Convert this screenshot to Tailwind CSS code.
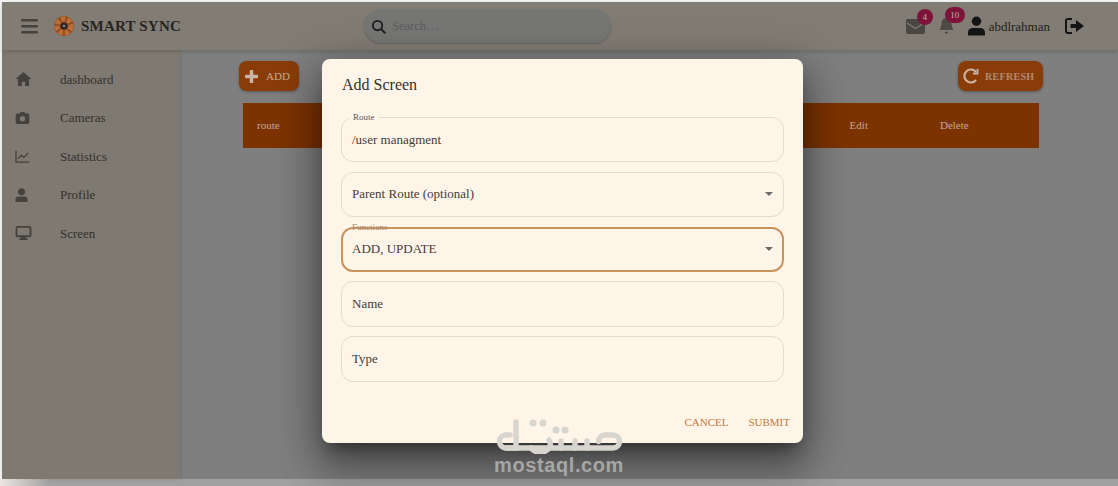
<!DOCTYPE html>
<html lang="en">
<head>
    <meta charset="UTF-8">
    <meta name="viewport" content="width=device-width, initial-scale=1.0">
    <title>Smart Sync</title>
    <script src="https://cdn.jsdelivr.net/npm/@tailwindcss/browser@4"></script>
</head>
<body class="relative w-[1118px] h-[486px] overflow-hidden bg-[#a0a0a0] font-['Liberation_Serif',serif]">
    <div class="h-[2px] bg-[#f2f2f2]"></div>
    <div class="flex">
        <div class="w-[2px] bg-[#f2f2f2]"></div>
        <div class="flex-1 h-[477px] flex flex-col bg-[#7f7f7f]">
            <!-- Header -->
            <header class="h-[48px] shrink-0 flex items-center bg-[#817c74] shadow-[0_2px_4px_rgba(0,0,0,0.15)] relative">
                <svg class="ml-[19px] w-[17px] h-[16px]" viewBox="0 0 17 16" fill="#45423d"><rect y="1" width="17" height="2.4" rx="1"/><rect y="7" width="17" height="2.4" rx="1"/><rect y="13" width="17" height="2.4" rx="1"/></svg>
                <svg class="ml-[16px] w-[20px] h-[20px]" viewBox="0 0 20 20"><circle cx="10" cy="10" r="10" fill="#9a4a18"/><circle cx="10" cy="10" r="7" fill="none" stroke="#b8703c" stroke-width="5" stroke-dasharray="4 2"/><circle cx="10" cy="10" r="3.600" fill="#2c2a28"/><circle cx="10" cy="10" r="1.200" fill="#8a8580"/></svg>
                <span class="ml-[7px] w-[283px] text-[15px] leading-none font-bold tracking-[0.2px] text-[#262422]">SMART SYNC</span>
                <div class="w-[247px] h-[34px] rounded-full bg-[#767675] shadow-[0_1px_2px_rgba(0,0,0,0.2)] flex items-center pl-[7px]">
                    <svg class="w-[15px] h-[15px]" viewBox="0 0 24 24" fill="none" stroke="#1f1f1f" stroke-width="3" stroke-linecap="round"><circle cx="10.500" cy="10.500" r="7.500"/><path d="M16 16l6 6"/></svg>
                    <span class="ml-[6px] text-[12.500px] text-[#5d5d5b]">Search…</span>
                </div>
                <div class="ml-auto flex items-center mr-[33px]">
                    <div class="relative w-[19px] h-[15px]">
                        <svg class="w-[19px] h-[15px]" viewBox="0 0 19 15"><rect width="19" height="15" rx="2" fill="#4a4743"/><path d="M1 4l8.500 5.500L18 4" fill="none" stroke="#817c74" stroke-width="1.400"/></svg>
                        <span class="absolute left-[11px] top-[-10px] w-[16px] h-[16px] rounded-full bg-[#7f1238] text-[9px] leading-[16px] text-center text-[#c9b0a0]">4</span>
                    </div>
                    <div class="relative ml-[13px] w-[17px] h-[18px]">
                        <svg class="w-[17px] h-[18px]" viewBox="0 0 16 20" fill="#4d4a45"><path d="M8 1a5.500 5.500 0 0 0-5.500 5.500c0 5-2 6.500-2 8h15c0-1.500-2-3-2-8A5.500 5.500 0 0 0 8 1z"/><path d="M6 16.500h4a2 2 0 0 1-4 0z"/></svg>
                        <span class="absolute left-[7px] top-[-10px] w-[20px] h-[16px] rounded-full bg-[#7f1238] text-[9px] leading-[16px] text-center text-[#c9b0a0]">10</span>
                    </div>
                    <svg class="ml-[13px] w-[17px] h-[20px]" viewBox="0 0 18 20" fill="#141414"><circle cx="9" cy="5" r="5"/><path d="M0 20v-3a5 5 0 0 1 5-5h8a5 5 0 0 1 5 5v3z"/></svg>
                    <span class="ml-[4px] text-[13px] leading-none text-[#201f1d]">abdlrahman</span>
                    <svg class="ml-[15px] w-[20px] h-[16px]" viewBox="0 0 20 16" fill="#141414"><path d="M7 1H3a2 2 0 0 0-2 2v10a2 2 0 0 0 2 2h4" fill="none" stroke="#141414" stroke-width="2"/><path d="M5.500 6H11V2l8 6-8 6v-4H5.500z"/></svg>
                </div>
            </header>
            <div class="flex flex-1">
                <!-- Sidebar -->
                <aside class="w-[178px] shrink-0 bg-[#7e7971] pt-[10px] shadow-[1px_0_3px_rgba(0,0,0,0.12)]">
                    <div class="h-[38.500px] flex items-center pl-[13px]">
                        <div class="w-[45px]"><svg class="w-[17px] h-[14px]" viewBox="0 0 17 15" fill="#45423d"><path d="M8.500 0L0 7.500h2.500V15h4.300v-4.500h3.400V15h4.300V7.500H17z"/></svg></div>
                        <span class="text-[13px] text-[#33312e]">dashboard</span>
                    </div>
                    <div class="h-[38.500px] flex items-center pl-[13px]">
                        <div class="w-[45px]"><svg class="w-[15px] h-[12px]" viewBox="0 0 17 15"><path fill="#45423d" fill-rule="evenodd" d="M5 2l1.200-2h4.600L12 2h3a2 2 0 0 1 2 2v9a2 2 0 0 1-2 2H2a2 2 0 0 1-2-2V4a2 2 0 0 1 2-2zm3.500 3a3.300 3.300 0 1 0 0 6.600 3.300 3.300 0 0 0 0-6.600z"/></svg></div>
                        <span class="text-[13px] text-[#33312e]">Cameras</span>
                    </div>
                    <div class="h-[38.500px] flex items-center pl-[13px]">
                        <div class="w-[45px]"><svg class="w-[15px] h-[13px]" viewBox="0 0 17 15" fill="none" stroke="#45423d" stroke-width="1.600"><path d="M1 1v13h15.500"/><path d="M3.500 10l3.500-4 3 2.500 5-5"/></svg></div>
                        <span class="text-[13px] text-[#33312e]">Statistics</span>
                    </div>
                    <div class="h-[38.500px] flex items-center pl-[13px]">
                        <div class="w-[45px]"><svg class="w-[13px] h-[14px]" viewBox="0 0 13 15" fill="#45423d"><circle cx="6.500" cy="4" r="3.800"/><path d="M0 15v-2.500A3.500 3.500 0 0 1 3.500 9h6a3.500 3.500 0 0 1 3.500 3.500V15z"/></svg></div>
                        <span class="text-[13px] text-[#33312e]">Profile</span>
                    </div>
                    <div class="h-[38.500px] flex items-center pl-[13px]">
                        <div class="w-[45px]"><svg class="w-[17px] h-[14px]" viewBox="0 0 17 15"><path fill="#45423d" fill-rule="evenodd" d="M2 0h13a2 2 0 0 1 2 2v8a2 2 0 0 1-2 2h-4l.5 1.500H13V15H4v-1.500h1.500L6 12H2a2 2 0 0 1-2-2V2a2 2 0 0 1 2-2zm0 2v8h13V2z"/></svg></div>
                        <span class="text-[13px] text-[#33312e]">Screen</span>
                    </div>
                </aside>
                <!-- Main -->
                <main class="flex-1 pt-[11px] pl-[59px]">
                    <div class="w-[804px] flex justify-between">
                        <button class="w-[60px] h-[30px] rounded-[8px] bg-[#8a3c08] shadow-[0_1px_3px_rgba(0,0,0,0.3)] flex items-center pl-[6px]">
                            <svg class="w-[13px] h-[13px]" viewBox="0 0 15 15" fill="#c9b5a5"><rect x="5.500" y="0" width="4" height="15" rx="1"/><rect x="0" y="5.500" width="15" height="4" rx="1"/></svg>
                            <span class="ml-[8px] text-[11px] text-[#c9a890]">ADD</span>
                        </button>
                        <button class="w-[85px] h-[30px] rounded-[8px] bg-[#8a3c08] shadow-[0_1px_3px_rgba(0,0,0,0.3)] flex items-center pl-[5px]">
                            <svg class="w-[16px] h-[16px]" viewBox="0 0 16 16" fill="none" stroke="#c9b5a5" stroke-width="2.200"><path d="M13 12a6.500 6.500 0 1 1 0-8"/><path d="M14.500 1v4.500H10" stroke-width="1.800"/></svg>
                            <span class="ml-[6px] text-[10px] font-bold tracking-[0.3px] text-[#b08a78]">REFRESH</span>
                        </button>
                    </div>
                    <div class="mt-[12px] ml-[4px] w-[796px] h-[45px] bg-[#7d3300] relative flex items-center text-[11px] text-[#c4a898]">
                        <span class="ml-[14px]">route</span>
                        <span class="ml-[570px]">Edit</span>
                        <span class="ml-[72px]">Delete</span>
                    </div>
                </main>
            </div>
        </div>
    </div>
    <div class="absolute left-0 top-[479px] w-[50px] h-[7px] bg-gradient-to-r from-[#ece6e2] to-transparent"></div>

    <!-- Add Screen dialog -->
    <div class="absolute left-[322px] top-[59px] w-[481px] h-[384px] rounded-[8px] bg-[#fff4e8] shadow-[0_11px_15px_-7px_rgba(0,0,0,0.4),0_24px_38px_3px_rgba(0,0,0,0.3),0_9px_46px_8px_rgba(0,0,0,0.2)] flex flex-col px-[19px] text-[#3f3d3b]">
        <h2 class="mt-[16px] ml-[1px] text-[16px] leading-[20px] text-[#33312f]">Add Screen</h2>
        <div class="relative mt-[22px] h-[45px] rounded-[12px] border border-[#e4dacd] flex items-center px-[10px] text-[13px]">
            <span class="absolute left-[7px] top-[-7px] px-[4px] bg-[#fff4e8] text-[9px] leading-[12px] text-[#5b5854]">Route</span>
            /user managment
        </div>
        <div class="mt-[10px] h-[45px] rounded-[12px] border border-[#e4dacd] flex items-center justify-between px-[10px] pb-[1px] text-[13px]">
            <span>Parent Route (optional)</span>
            <svg class="w-[8px] h-[4px]" viewBox="0 0 8 4" fill="#6b6966"><path d="M0 0h8L4 4z"/></svg>
        </div>
        <div class="relative mt-[10px] h-[45px] rounded-[12px] border-2 border-[#c8935d] flex items-center justify-between px-[9px] pb-[1px] text-[13px]">
            <span class="absolute left-[9px] top-[-8px] text-[9px] leading-[12px] text-[#a58a6f]">Functions</span>
            <span>ADD, UPDATE</span>
            <svg class="w-[8px] h-[4px]" viewBox="0 0 8 4" fill="#6b6966"><path d="M0 0h8L4 4z"/></svg>
        </div>
        <div class="mt-[9px] h-[46px] rounded-[12px] border border-[#e4dacd] flex items-center px-[10px] text-[13px]">Name</div>
        <div class="mt-[9px] h-[46px] rounded-[12px] border border-[#e4dacd] flex items-center px-[10px] text-[13px]">Type</div>
        <div class="mt-auto mb-[14px] flex justify-end gap-[20px] -mr-[6px] text-[11px] leading-[14px] text-[#c07a3c]">
            <button>CANCEL</button>
            <button>SUBMIT</button>
        </div>
    </div>

    <!-- Watermark -->
    <div class="absolute left-[494px] top-[418px] w-[130px] flex flex-col items-center text-[#d8d4ce]">
        <svg class="w-[128px] h-[36px]" viewBox="0 0 128 36" fill="none" stroke="currentColor" stroke-width="5.500" stroke-linecap="round"><path d="M21 4V30H11a6.500 6.500 0 0 1 0-13h4"/><path d="M11 30H118a6.500 6.500 0 0 0 0-13h-8a6.500 6.500 0 0 0-6.500 6.500"/><path d="M36 30a10 8 0 0 0 18-8"/><path d="M66 30v-7M80 30v-7M92 30v-7"/><g fill="currentColor" stroke="none"><circle cx="38" cy="5" r="3.500"/><circle cx="48" cy="5" r="3.500"/><circle cx="61" cy="12" r="3.500"/><circle cx="70" cy="12" r="3.500"/></g></svg>
        <span class="font-['Liberation_Sans',sans-serif] font-bold text-[20px] leading-[22px] tracking-[0.6px] text-[#a6a6a4]">mostaql.com</span>
    </div>
</body>
</html>
